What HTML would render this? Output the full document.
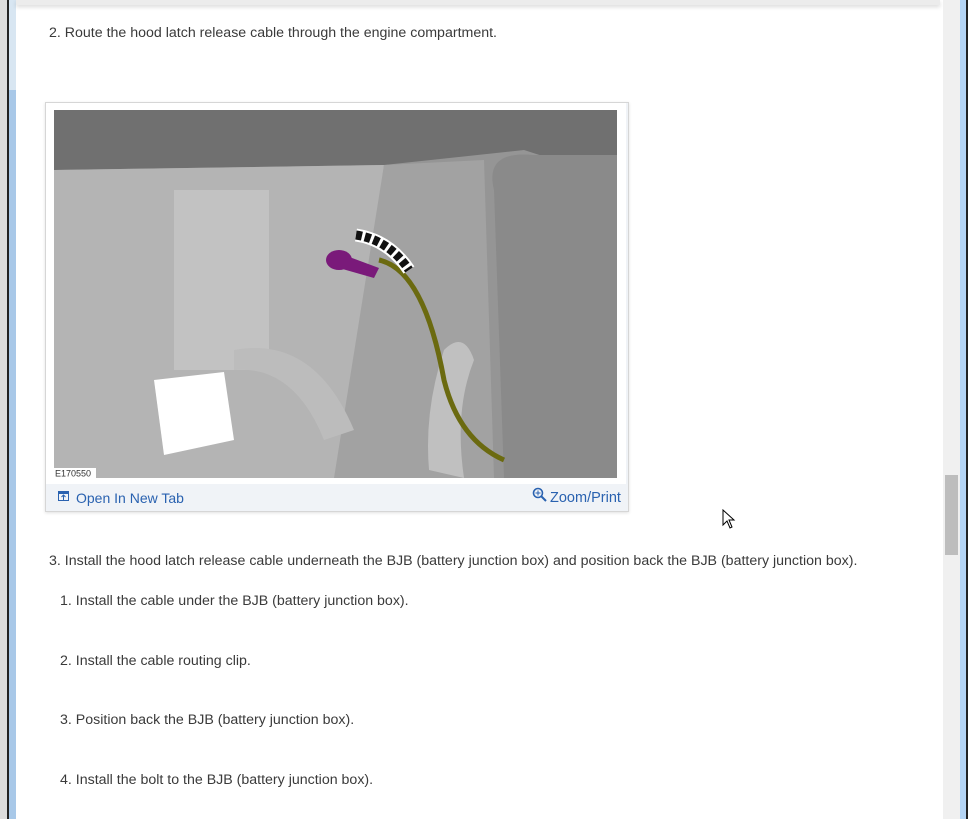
<!DOCTYPE html>
<html><head><meta charset="utf-8"><style>
body{margin:0;width:968px;height:819px;overflow:hidden;background:#fff;font-family:"Liberation Sans",Arial,sans-serif;position:relative}
.abs{position:absolute}
.t{position:absolute;font-size:14.2px;color:#3a3a3a;white-space:nowrap}
</style></head><body>
<div class="abs" style="left:0;top:0;width:7px;height:819px;background:#dcdcdc"></div>
<div class="abs" style="left:7px;top:0;width:2px;height:819px;background:#222"></div>
<div class="abs" style="left:9px;top:0;width:7px;height:819px;background:#a8c8e8"></div>
<div class="abs" style="left:9px;top:0;width:7px;height:90px;background:#d8e6f2"></div>
<div class="abs" style="left:16px;top:0;width:924px;height:5px;background:#ececec;box-shadow:0 2px 4px rgba(0,0,0,.15)"></div>
<div class="abs" style="left:943px;top:0;width:17px;height:819px;background:#f0f0f0"></div>
<div class="abs" style="left:945px;top:475px;width:13px;height:80px;background:#bdbdbd"></div>
<div class="abs" style="left:960px;top:0;width:6px;height:819px;background:#b4d4f4"></div>
<div class="abs" style="left:966px;top:0;width:2px;height:819px;background:#222"></div>

<div class="t" style="left:49px;top:25px">2. Route the hood latch release cable through the engine compartment.</div>

<div class="abs" style="left:45px;top:102px;width:582px;height:408px;border:1px solid #d6d6d6;background:#f0f3f7;box-shadow:0 1px 3px rgba(0,0,0,.12)"></div>
<div class="abs" style="left:46px;top:103px;width:580px;height:381px;background:#fff"></div>
<svg class="abs" style="left:54px;top:110px" width="563" height="368" viewBox="0 0 563 368">
<rect width="563" height="368" fill="#959595"/>
<path d="M0 0H563V70L470 40 330 55 0 60Z" fill="#707070"/>
<path d="M0 60 330 55 290 368H0Z" fill="#b4b4b4"/>
<path d="M330 55 430 50 440 368H280Z" fill="#a2a2a2"/>
<path d="M440 80Q430 40 480 45H563V368H450Z" fill="#8a8a8a"/>
<rect x="120" y="80" width="95" height="180" fill="#c2c2c2"/>
<path d="M100 270 170 262 180 330 110 345Z" fill="#fff"/>
<path d="M180 240Q260 225 300 320L270 330Q240 255 180 260Z" fill="#bcbcbc"/>
<path d="M375 360Q370 300 390 240 410 220 420 250 400 300 410 368Z" fill="#c0c0c0"/>
<path d="M325 150Q370 160 390 270 405 330 450 350" stroke="#6b6a10" stroke-width="5" fill="none"/>
<ellipse cx="285" cy="150" rx="13" ry="10" fill="#7a1a7a"/>
<path d="M290 145 325 158 320 168 285 158Z" fill="#7a1a7a"/>
<path d="M302 125Q335 130 355 160" stroke="#fff" stroke-width="13" fill="none"/>
<path d="M302 125Q335 130 355 160" stroke="#111" stroke-width="9" stroke-dasharray="6 3" fill="none"/>
<rect x="0" y="358" width="42" height="10" fill="#fff"/>
<text x="1" y="366.5" font-size="9" fill="#333" font-family="Liberation Sans">E170550</text>
</svg>
<svg class="abs" style="left:58px;top:491px" width="12" height="11"><rect x="0.5" y="0.5" width="10" height="9" fill="none" stroke="#2a62b0"/><rect x="0" y="0" width="11" height="3" fill="#2a62b0"/><path d="M5.5 4v5M3.5 6l2-2 2 2" stroke="#2a62b0" fill="none"/></svg>
<div class="t" style="left:76px;top:490px;color:#2a62b0;font-size:14px">Open In New Tab</div>
<svg class="abs" style="left:532px;top:487px" width="16" height="16"><circle cx="6" cy="6" r="4.5" fill="none" stroke="#2a62b0" stroke-width="1.6"/><path d="M9.5 9.5 14 14" stroke="#2a62b0" stroke-width="2"/><path d="M6 3.5v5M3.5 6h5" stroke="#2a62b0"/></svg>
<div class="t" style="left:550px;top:490px;color:#2a62b0;font-size:14.5px">Zoom/Print</div>

<svg class="abs" style="left:722px;top:509px" width="14" height="20"><path d="M1 1V16L5 12 8 19 10 18 7 11H12Z" fill="#fff" stroke="#000"/></svg>

<div class="t" style="left:49px;top:553px">3. Install the hood latch release cable underneath the BJB (battery junction box) and position back the BJB (battery junction box).</div>
<div class="t" style="left:60px;top:593px">1. Install the cable under the BJB (battery junction box).</div>
<div class="t" style="left:60px;top:653px">2. Install the cable routing clip.</div>
<div class="t" style="left:60px;top:712px">3. Position back the BJB (battery junction box).</div>
<div class="t" style="left:60px;top:772px">4. Install the bolt to the BJB (battery junction box).</div>
</body></html>
